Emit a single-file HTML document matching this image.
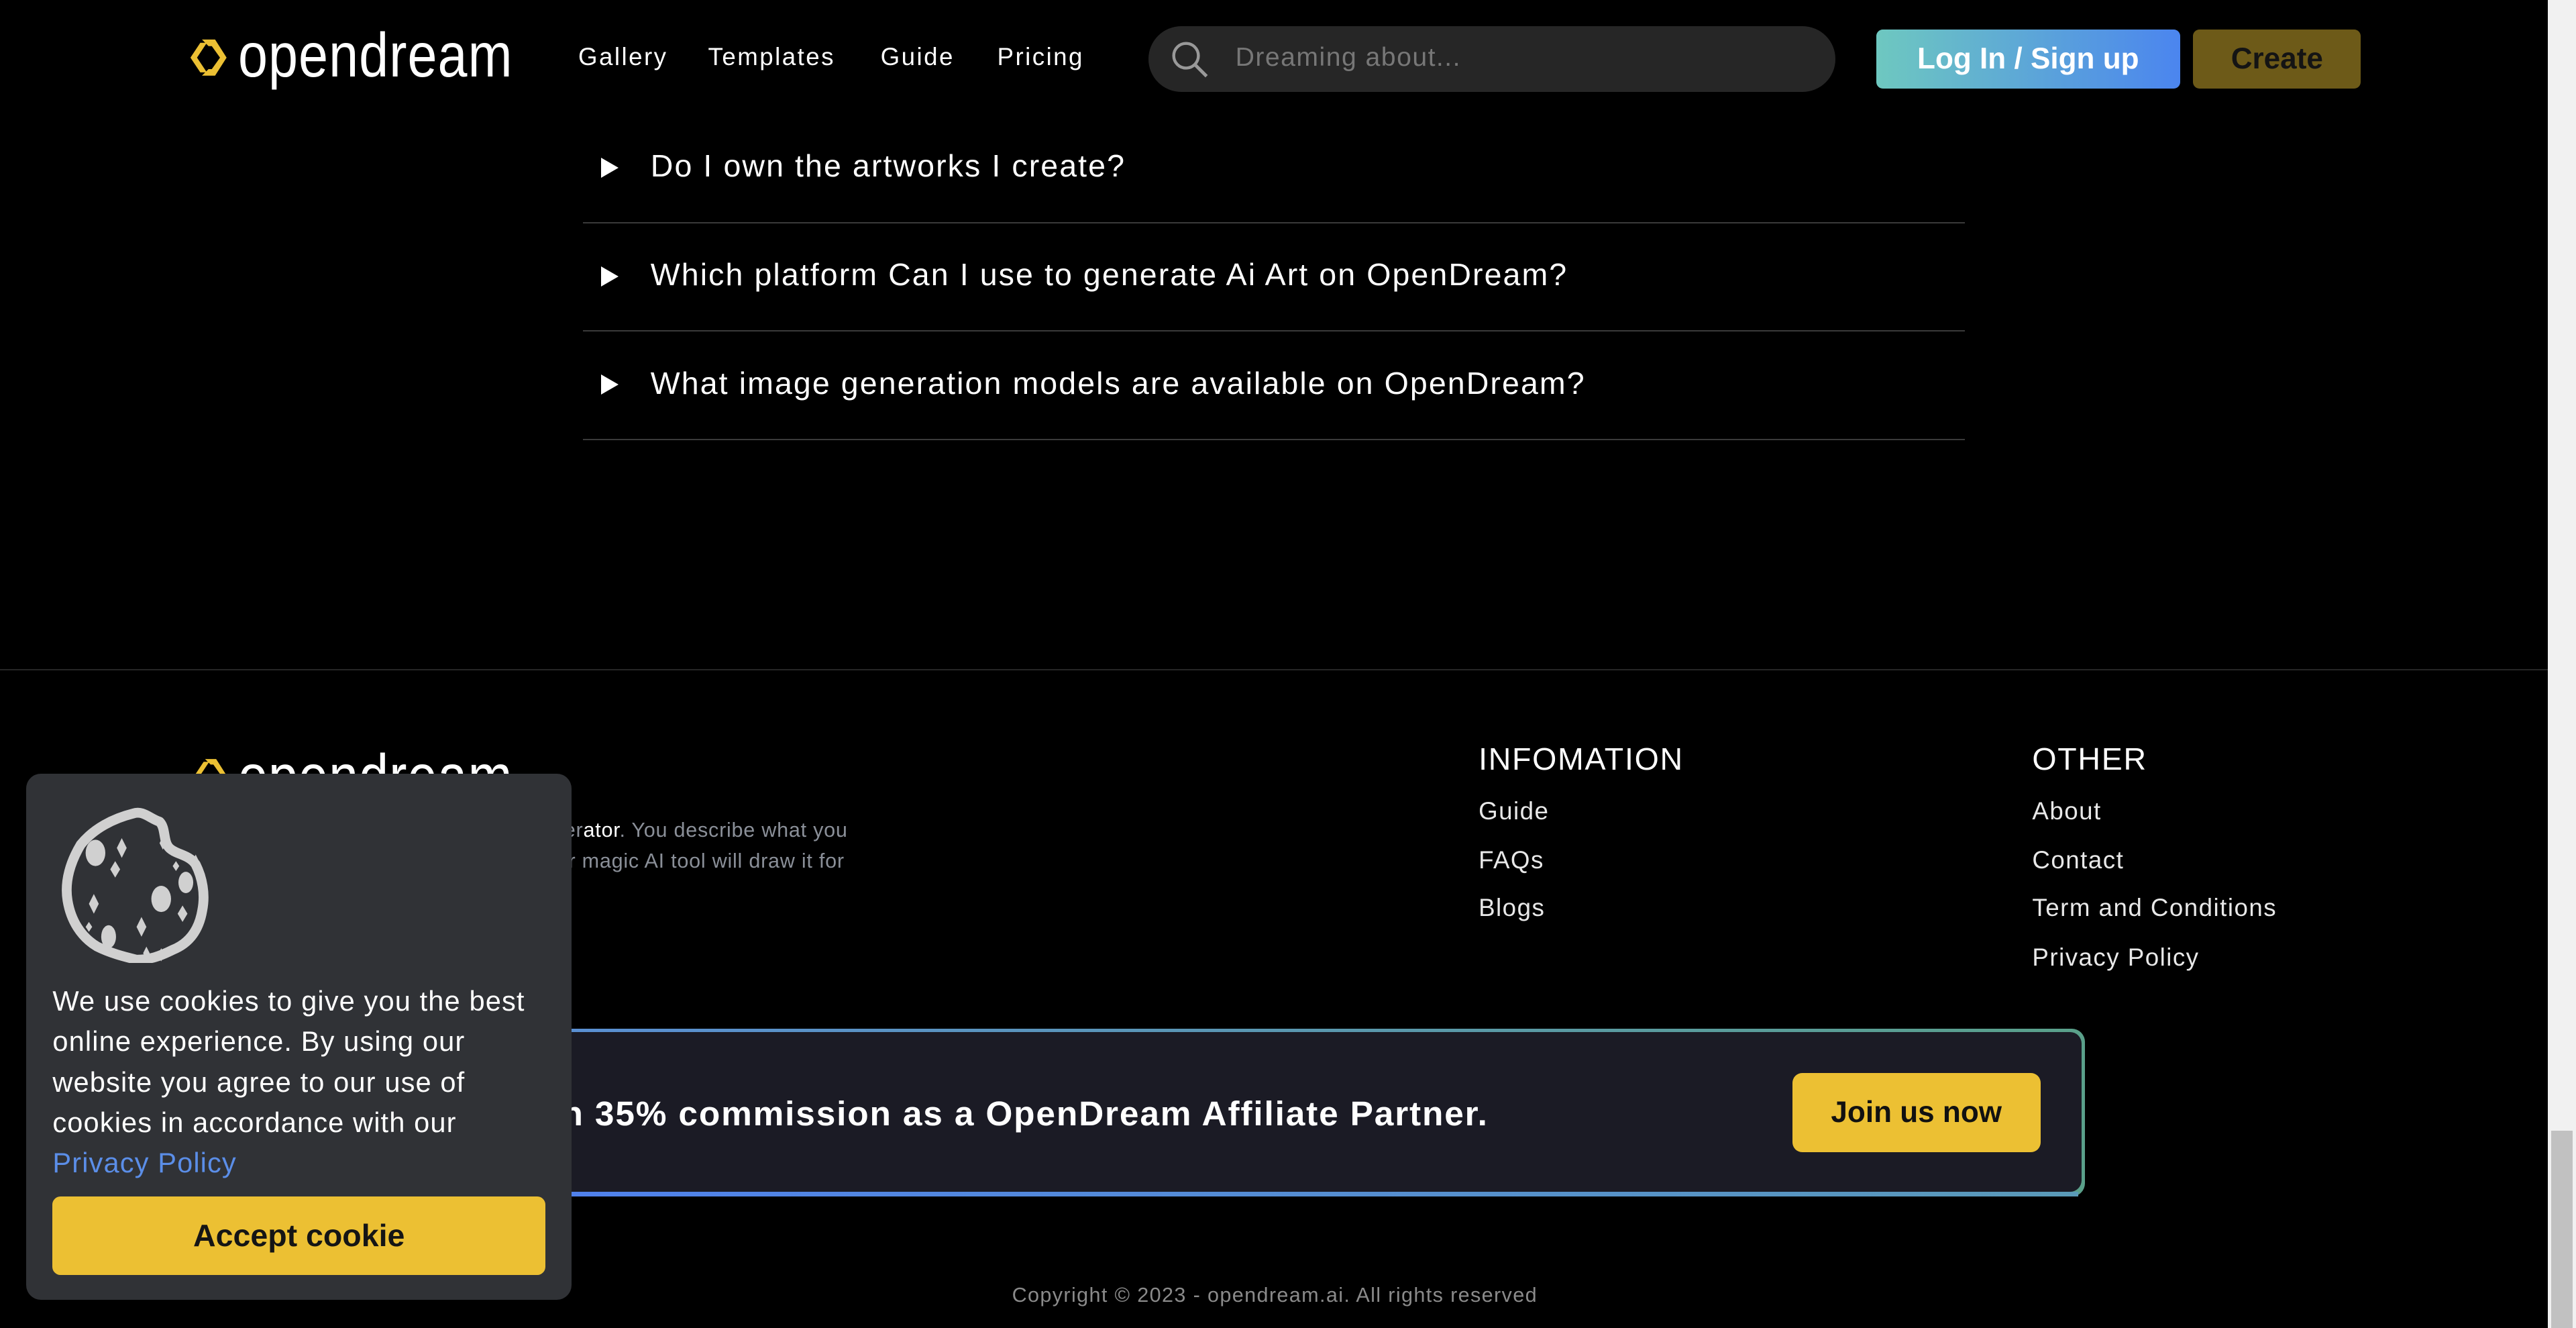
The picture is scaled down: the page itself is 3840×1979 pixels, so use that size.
<!DOCTYPE html>
<html><head><meta charset="utf-8"><style>
html,body{margin:0;padding:0;background:#000;overflow:hidden}
#r{position:relative;width:1568px;height:808px;zoom:2.449;font-family:"Liberation Sans",sans-serif;color:#fff;overflow:hidden}
.a{position:absolute;white-space:nowrap}
.nav{font-size:15px;top:26px;letter-spacing:1px}
.faq{left:355px;width:841px;height:66px;border-bottom:1px solid #3a3a3a}
.faq span{position:absolute;left:41px;top:21px;font-size:19px;letter-spacing:.85px}
.faq i{position:absolute;left:11px;top:27px;width:0;height:0;border-left:11px solid #fff;border-top:6.5px solid transparent;border-bottom:6.5px solid transparent}
.fl{font-size:15px;color:#e8e8e8;letter-spacing:.6px}
</style></head><body><div id="r">
<!-- header -->
<svg class="a" style="left:114px;top:22px" width="26" height="26" viewBox="0 0 26 26"><path d="M9 2h8l7 11-7 11H9l4-4h2l5-7-5-7h-2z M2 13l6-9h4l-6 9 6 9H8z" fill="#ecc033"/></svg>
<div class="a" style="left:145px;top:12px;font-size:38px;transform:scaleX(.85);transform-origin:left;letter-spacing:.5px">opendream</div>
<div class="a nav" style="left:352px">Gallery</div>
<div class="a nav" style="left:431px">Templates</div>
<div class="a nav" style="left:536px">Guide</div>
<div class="a nav" style="left:607px">Pricing</div>
<div class="a" style="left:699px;top:16px;width:418px;height:40px;border-radius:20px;background:#262626"></div>
<svg class="a" style="left:713px;top:25px" width="23" height="23" viewBox="0 0 23 23"><circle cx="9" cy="9" r="7.5" stroke="#999" stroke-width="1.8" fill="none"/><path d="M14.5 14.5l7 7" stroke="#999" stroke-width="2"/></svg>
<div class="a" style="left:752px;top:26px;font-size:16px;color:#777;letter-spacing:.6px">Dreaming about...</div>
<div class="a" style="left:1142px;top:18px;width:185px;height:36px;border-radius:4px;background:linear-gradient(90deg,#6ec8c0,#4b85ef);font-size:18px;font-weight:bold;text-align:center;line-height:36px">Log In / Sign up</div>
<div class="a" style="left:1335px;top:18px;width:102px;height:36px;border-radius:4px;background:#6d5a18;color:#141414;font-size:18px;font-weight:bold;text-align:center;line-height:36px">Create</div>
<!-- faq -->
<div class="a faq" style="top:69px"><i></i><span>Do I own the artworks I create?</span></div>
<div class="a faq" style="top:135px"><i></i><span>Which platform Can I use to generate Ai Art on OpenDream?</span></div>
<div class="a faq" style="top:201px"><i></i><span>What image generation models are available on OpenDream?</span></div>
<div class="a" style="left:0;top:407px;width:1551px;height:1px;background:#262626"></div>
<!-- footer -->
<svg class="a" style="left:117px;top:460px" width="22" height="22" viewBox="0 0 26 26"><path d="M9 2h8l7 11-7 11H9l4-4h2l5-7-5-7h-2z M2 13l6-9h4l-6 9 6 9H8z" fill="#ecc033"/></svg>
<div class="a" style="left:145px;top:451px;font-size:38px;transform:scaleX(.85);transform-origin:left;letter-spacing:.5px">opendream</div>
<div class="a" style="right:1052px;top:498px;font-size:12.5px;color:#8a8f98;letter-spacing:.3px">Opendream is a free AI art gener<span style="color:#fff">ator</span>. You describe what you</div>
<div class="a" style="right:1054px;top:517px;font-size:12.5px;color:#8a8f98;letter-spacing:.3px">want to see, and our magic AI tool will draw it for</div>
<div class="a" style="left:900px;top:451px;font-size:19px;letter-spacing:.7px">INFOMATION</div>
<div class="a fl" style="left:900px;top:485px">Guide</div>
<div class="a fl" style="left:900px;top:515px">FAQs</div>
<div class="a fl" style="left:900px;top:544px">Blogs</div>
<div class="a" style="left:1237px;top:451px;font-size:19px;letter-spacing:.7px">OTHER</div>
<div class="a fl" style="left:1237px;top:485px">About</div>
<div class="a fl" style="left:1237px;top:515px">Contact</div>
<div class="a fl" style="left:1237px;top:544px">Term and Conditions</div>
<div class="a fl" style="left:1237px;top:574px">Privacy Policy</div>
<div class="a" style="left:280px;top:626px;width:989px;height:102px;border-radius:8px;background:linear-gradient(90deg,#5a8ed8,#5aa08a)"></div>
<div class="a" style="left:282px;top:628px;width:985px;height:97px;border-radius:7px;background:#1b1b25"></div>
<div class="a" style="left:280px;top:725px;width:985px;height:3px;background:linear-gradient(90deg,#4f7ff0,#5a9ab8)"></div>
<div class="a" style="right:662px;top:665px;font-size:21px;font-weight:bold;letter-spacing:.75px">Earn 35% commission as a OpenDream Affiliate Partner.</div>
<div class="a" style="left:1091px;top:653px;width:151px;height:48px;border-radius:6px;background:#ecc033;color:#111;font-size:18px;font-weight:bold;text-align:center;line-height:48px">Join us now</div>
<div class="a" style="left:616px;top:781px;font-size:12.5px;color:#8a8a8a;letter-spacing:.55px">Copyright © 2023 - opendream.ai. All rights reserved</div>
<!-- scrollbar -->
<div class="a" style="left:1551px;top:0;width:17px;height:808px;background:#f1f1f1"></div>
<div class="a" style="left:1553px;top:688px;width:13px;height:120px;background:#c1c1c1"></div>
<!-- cookie -->
<div class="a" style="left:16px;top:471px;width:332px;height:320px;border-radius:9px;background:#303236"></div>
<svg class="a" style="left:35px;top:490px" width="96" height="96" viewBox="0 0 96 96">
<path d="M46 5 C52 3 56 8 62 10 C66 14 64 22 68 26 C72 30 80 30 84 36 C88 44 90 54 88 64 C86 76 80 84 70 88 C62 92 56 94 48 94 C40 92 32 90 24 86 C14 80 8 70 6 58 C4 46 8 34 14 24 C22 14 34 8 46 5 Z" fill="none" stroke="#d0d0d0" stroke-width="6" stroke-linejoin="round"/>
<g fill="#d0d0d0"><ellipse cx="23" cy="29" rx="6" ry="8"/><ellipse cx="63" cy="57" rx="6" ry="8"/><ellipse cx="78" cy="47" rx="4.5" ry="6.5"/><ellipse cx="31" cy="80" rx="4.5" ry="7"/>
<path d="M39 20l3 6-3 6-3-6z M35 34l3 5-3 5-3-5z M22 54l3 6-3 6-3-6z M19 71l2 3-2 3-2-3z M51 68l3 6-3 6-3-6z M76 61l3 5-3 5-3-5z M54 86l2 4-2 4-2-4z M63 87l2 4-2 4-2-4z M64 19l2 4-2 4-2-4z M72 34l2 3-2 3-2-3z M84 30l1.5 3-1.5 3-1.5-3z"/></g></svg>
<div class="a" style="left:32px;top:597px;font-size:17px;line-height:24.6px;white-space:normal;width:300px;letter-spacing:.45px">We use cookies to give you the best online experience. By using our website you agree to our use of cookies in accordance with our <span style="color:#5b8ee8">Privacy Policy</span></div>
<div class="a" style="left:32px;top:728px;width:300px;height:48px;border-radius:5px;background:#ecc033;color:#151515;font-size:19px;font-weight:bold;text-align:center;line-height:48px">Accept cookie</div>
</div></body></html>
